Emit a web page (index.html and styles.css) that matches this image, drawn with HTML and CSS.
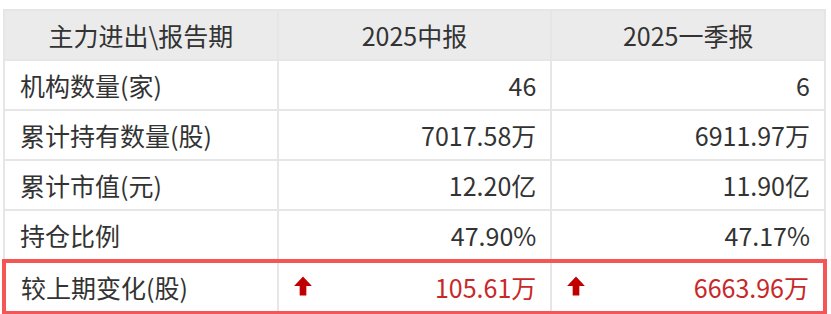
FILE: index.html
```html
<!DOCTYPE html>
<html>
  <head>
    <title>主力进出</title>
    <link rel="stylesheet" href="styles.css">
  </head>
  <body>
    <table class="holdings">
      <thead>
        <tr>
          <th>主力进出\报告期</th>
          <th>2025中报</th>
          <th>2025一季报</th>
        </tr>
      </thead>
      <tbody>
        <tr>
          <td class="label">机构数量(家)</td>
          <td class="num">46</td>
          <td class="num">6</td>
        </tr>
        <tr>
          <td class="label">累计持有数量(股)</td>
          <td class="num">7017.58万</td>
          <td class="num">6911.97万</td>
        </tr>
        <tr>
          <td class="label">累计市值(元)</td>
          <td class="num">12.20亿</td>
          <td class="num">11.90亿</td>
        </tr>
        <tr>
          <td class="label">持仓比例</td>
          <td class="num">47.90%</td>
          <td class="num">47.17%</td>
        </tr>
        <tr class="change">
          <td class="label">较上期变化(股)</td>
          <td class="num up">
            <svg class="arrow" viewBox="0 0 16 18"><path d="M8 0.5 L16 9 L11 9 L11 17.5 L5 17.5 L5 9 L0 9 Z"/></svg>
            <span>105.61万</span>
          </td>
          <td class="num up">
            <svg class="arrow" viewBox="0 0 16 18"><path d="M8 0.5 L16 9 L11 9 L11 17.5 L5 17.5 L5 9 L0 9 Z"/></svg>
            <span>6663.96万</span>
          </td>
        </tr>
      </tbody>
    </table>
  </body>
</html>
```

FILE: styles.css
```css
body {
  margin:9px 0 0 2px;
  background:#fff;
  font-family:"Noto Sans CJK SC", "Noto Sans", sans-serif;
  color:#333;
}
.holdings {
  width:825px;
  border-collapse:collapse;
  table-layout:fixed;
  font-size:25px;
}
.holdings th,
.holdings td {
  height:48px;
  padding:0 14px;
  border:2px solid #e6e6e6;
  font-weight:normal;
  line-height:1;
}
.holdings th {
  background:#ebebeb;
  text-align:center;
}
.holdings .label {
  text-align:left;
  padding-left:15px;
}
.holdings .num {
  text-align:right;
}
.change td {
  border-top:4px solid #f45656;
  border-bottom:4px solid #f45656;
}
.change td:first-child {
  border-left:4px solid #f45656;
}
.change td:last-child {
  border-right:4px solid #f45656;
}
.up {
  color:#c8282a;
}
.up .arrow {
  float:left;
  width:18px;
  height:20px;
  margin:1px 0 0 1px;
  fill:#c00000;
}
```
